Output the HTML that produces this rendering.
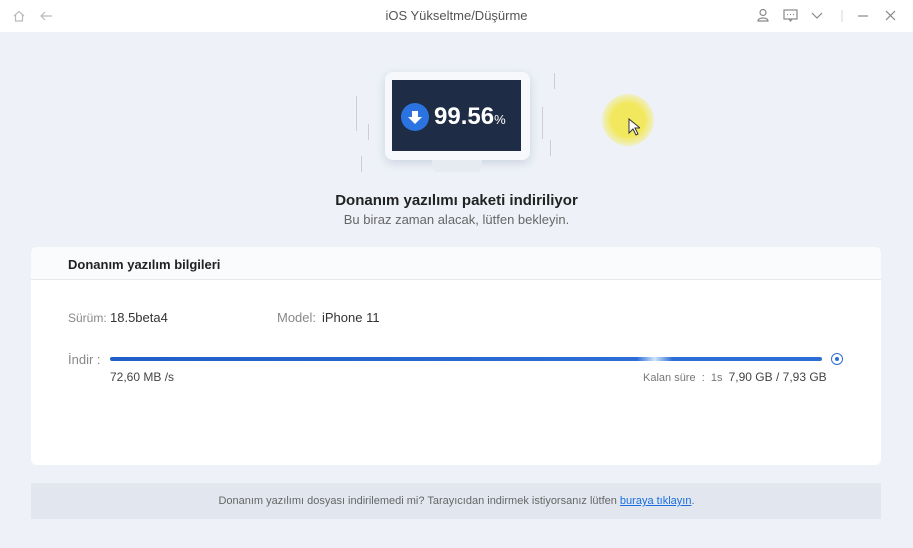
<!DOCTYPE html>
<html><head><meta charset="utf-8"><style>
body{margin:0;width:913px;height:548px;background:#eef2f8;font-family:"Liberation Sans",sans-serif;position:relative;overflow:hidden}
.t{position:absolute;white-space:nowrap}
</style></head><body>
<div style="position:absolute;left:0;top:0;width:913px;height:32px;background:#fff"></div>
<div class="t" style="left:0;width:913px;top:8px;text-align:center;font-size:13px;color:#555">iOS Yükseltme/Düşürme</div>
<svg class="t" style="left:12px;top:9px" width="40" height="14" fill="none" stroke="#bbb" stroke-width="1.2"><path d="M2 7L7 2.5 12 7M3.5 6v6h7V6"/><path d="M40 7H29M33 3l-4 4 4 4"/></svg>
<svg class="t" style="left:755px;top:8px" width="150" height="16" fill="none" stroke="#888" stroke-width="1.2"><circle cx="8" cy="4.5" r="3"/><path d="M3 13c0-4 10-4 10 0z"/><rect x="29" y="2" width="13" height="9"/><path d="M34 11l1.5 2 1.5-2M32 6.5h1M35 6.5h1M38 6.5h1"/><path d="M57 5l5 5 5-5"/><path d="M87 2v12" stroke="#ddd"/><path d="M103 8h10"/><path d="M131 3l9 9M140 3l-9 9"/></svg>
<!-- monitor -->
<div class="t" style="left:385px;top:72px;width:145px;height:88px;background:#f6f8fb;border-radius:8px;box-shadow:0 3px 10px rgba(120,140,170,.3)"></div>
<div class="t" style="left:392px;top:80px;width:129px;height:71px;background:#1e2d45"></div>
<div class="t" style="left:432px;top:160px;width:50px;height:12px;background:#e6ebf2;border-radius:0 0 6px 6px"></div>
<div class="t" style="left:401px;top:103px;width:28px;height:28px;border-radius:50%;background:#2a73e0"></div>
<svg class="t" style="left:401px;top:103px" width="28" height="28"><path d="M11 8h6v6h4l-7 7-7-7h4z" fill="#fff"/></svg>
<div class="t" style="left:434px;top:103px;font-size:24px;font-weight:bold;color:#fff">99.56<span style="font-size:13px;font-weight:normal">%</span></div>
<div class="t" style="left:356px;top:96px;width:1px;height:35px;background:#ccd"></div>
<div class="t" style="left:368px;top:124px;width:1px;height:16px;background:#ccd"></div>
<div class="t" style="left:361px;top:156px;width:1px;height:16px;background:#ccd"></div>
<div class="t" style="left:554px;top:73px;width:1px;height:16px;background:#ccd"></div>
<div class="t" style="left:542px;top:107px;width:1px;height:32px;background:#ccd"></div>
<div class="t" style="left:550px;top:140px;width:1px;height:16px;background:#ccd"></div>
<div class="t" style="left:602px;top:94px;width:52px;height:52px;border-radius:50%;background:radial-gradient(#f2e85e 45%,rgba(243,234,106,.35) 70%,rgba(243,234,106,0))"></div>
<svg class="t" style="left:628px;top:118px" width="12" height="18"><path d="M1 1v14l4-4 3 6 2-1-3-6h5z" fill="#fff" stroke="#333"/></svg>
<div class="t" style="left:0;width:913px;top:192px;text-align:center;font-size:15px;font-weight:bold;color:#222">Donanım yazılımı paketi indiriliyor</div>
<div class="t" style="left:0;width:913px;top:212px;text-align:center;font-size:13px;color:#666">Bu biraz zaman alacak, lütfen bekleyin.</div>
<!-- card -->
<div class="t" style="left:31px;top:247px;width:850px;height:218px;background:#fff;border-radius:6px"></div>
<div class="t" style="left:31px;top:247px;width:850px;height:32px;background:#fafbfd;border-bottom:1px solid #e6e9ee;border-radius:6px 6px 0 0"></div>
<div class="t" style="left:68px;top:257px;font-size:13px;font-weight:bold;color:#222">Donanım yazılım bilgileri</div>
<div class="t" style="left:68px;top:311px;font-size:12px;color:#888">Sürüm:</div>
<div class="t" style="left:110px;top:310px;font-size:13px;color:#333">18.5beta4</div>
<div class="t" style="left:277px;top:310px;font-size:13px;color:#888">Model:</div>
<div class="t" style="left:322px;top:310px;font-size:13px;color:#333">iPhone 11</div>
<div class="t" style="left:68px;top:352px;font-size:13px;color:#888">İndir :</div>
<div class="t" style="left:110px;top:357px;width:712px;height:4px;border-radius:2px;background:linear-gradient(90deg,#1f5fc7 0,#2d6ed6 74%,#cfe3fb 76.5%,#2d6ed6 79%,#2d6ed6 100%)"></div>
<div class="t" style="left:831px;top:353px;width:10px;height:10px;border:1px solid #2d6ed6;border-radius:50%"></div>
<div class="t" style="left:835px;top:357px;width:4px;height:4px;background:#2d6ed6;border-radius:50%"></div>
<div class="t" style="left:110px;top:370px;font-size:12px;color:#444">72,60 MB /s</div>
<div class="t" style="left:643px;top:370px;font-size:11px;color:#777">Kalan süre &nbsp;: &nbsp;1s &nbsp;<span style="font-size:12px;color:#444">7,90 GB / 7,93 GB</span></div>
<div class="t" style="left:31px;top:483px;width:850px;height:36px;background:#e2e7ef"></div>
<div class="t" style="left:0;width:913px;top:495px;text-align:center;font-size:11px;color:#666">Donanım yazılımı dosyası indirilemedi mi? Tarayıcıdan indirmek istiyorsanız lütfen <span style="color:#1a6ee0;text-decoration:underline">buraya tıklayın</span>.</div>
</body></html>
